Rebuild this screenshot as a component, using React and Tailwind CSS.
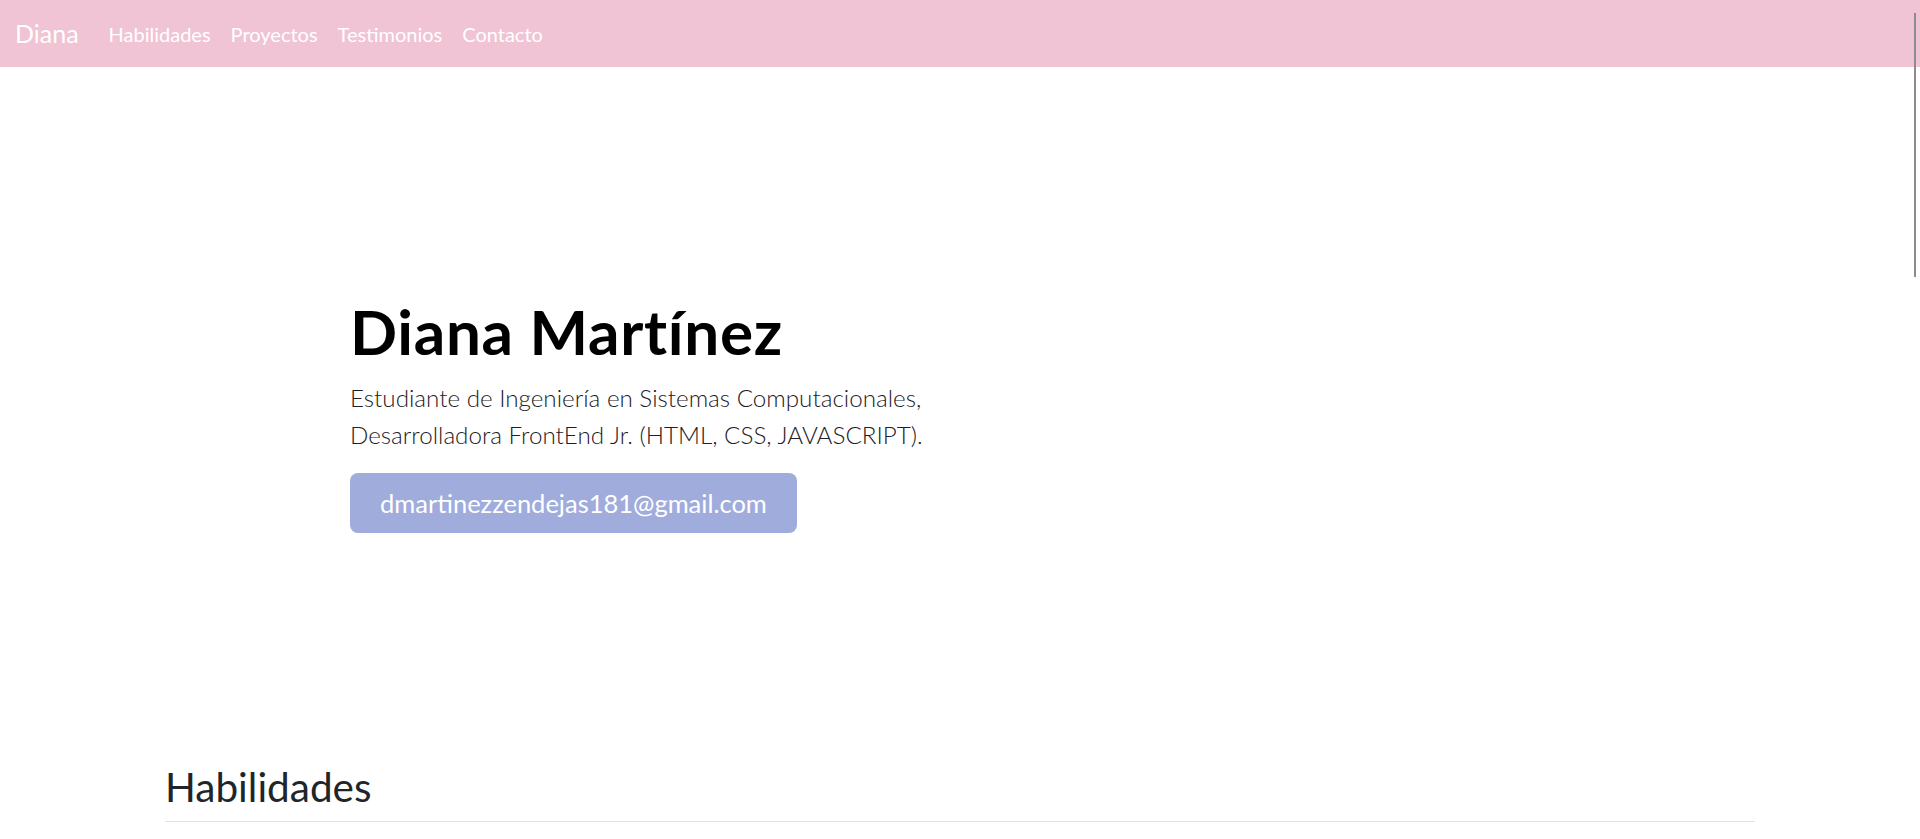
import React from "react";

const enlaces = ["Habilidades", "Proyectos", "Testimonios", "Contacto"];

export default function App() {
  return (
    <div className="relative h-[839px] overflow-hidden bg-white font-['Lato',sans-serif]">
      <nav className="flex h-[67px] items-center bg-[#f0c4d4] px-[15px]">
        <a href="#" className="mr-[20px] text-[25px] text-white">
          Diana
        </a>
        <ul className="flex">
          {enlaces.map((enlace) => (
            <li key={enlace}>
              <a href={`#${enlace.toLowerCase()}`} className="block px-[10px] text-[20px] text-white">
                {enlace}
              </a>
            </li>
          ))}
        </ul>
      </nav>

      <section className="pl-[350px] pt-[228px]">
        <h1 className="text-[62px] font-bold leading-[72px] tracking-[0.7px] text-black">Diana Martínez</h1>
        <p className="mt-[12px] text-[24.2px] font-light leading-[37px] text-[#1d2024]">
          Estudiante de Ingeniería en Sistemas Computacionales,
          <br />
          Desarrolladora FrontEnd Jr. (HTML, CSS, JAVASCRIPT).
        </p>
        <a
          href="mailto:dmartinezzendejas181@gmail.com"
          className="mt-[20px] inline-block h-[60px] rounded-[8px] bg-[#9facdc] px-[30px] text-[25.5px] leading-[60px] text-white"
        >
          dmartinezzendejas181@gmail.com
        </a>
      </section>

      <section id="habilidades" className="mx-[165px] mt-[230px]">
        <h2 className="border-b border-[#dee2e6] pb-[10px] text-[40.5px] leading-[48px] text-[#212529]">Habilidades</h2>
      </section>

      {/* barra de scroll superpuesta */}
      <div className="absolute right-[4px] top-[13px] h-[264px] w-[2px] bg-[#8c8c8c]" />
    </div>
  );
}
